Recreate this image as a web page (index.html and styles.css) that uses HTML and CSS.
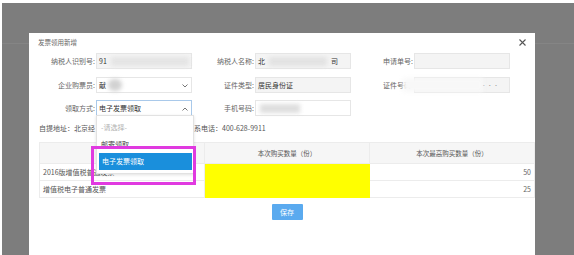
FILE: index.html
```html
<!DOCTYPE html>
<html lang="zh-CN">
<head>
    <meta charset="UTF-8">
    <meta name="viewport" content="width=device-width, initial-scale=1.0">
    <title>发票领用新增</title>
    <link rel="stylesheet" href="styles.css">
</head>
<body>
    <div class="screen">
        <div class="dialog">
            <div class="dialog-head">
                <span class="title">发票领用新增</span>
                <svg class="close" width="7" height="7" viewBox="0 0 7 7">
                    <path d="M0.5 0.5 L6.5 6.5 M6.5 0.5 L0.5 6.5" stroke="#555" stroke-width="1.1" fill="none"/>
                </svg>
            </div>

            <div class="form">
                <label>纳税人识别号:</label>
                <div class="field disabled">91<span class="blur b-id"></span></div>
                <label>纳税人名称:</label>
                <div class="field disabled">北<span class="blur b-name"></span>司</div>
                <label>申请单号:</label>
                <div class="field disabled"></div>

                <label>企业购票员:</label>
                <div class="field select">献<span class="blur b-buyer"></span>
                    <svg class="chevron" width="6" height="4" viewBox="0 0 6 4"><path d="M0.5 0.5 L3 3 L5.5 0.5" stroke="#777" fill="none"/></svg>
                </div>
                <label>证件类型:</label>
                <div class="field disabled">居民身份证</div>
                <label>证件号码:</label>
                <div class="field disabled"><span class="blur b-cert"></span><span class="dots">· · · · ·</span></div>

                <label>领取方式:</label>
                <div class="field select focus">电子发票领取
                    <svg class="chevron" width="6" height="4" viewBox="0 0 6 4"><path d="M0.5 3.5 L3 1 L5.5 3.5" stroke="#777" fill="none"/></svg>
                    <ul class="dropdown">
                        <li class="placeholder">-请选择-</li>
                        <li>邮寄领取</li>
                        <li class="active">电子发票领取</li>
                    </ul>
                </div>
                <label>手机号码:</label>
                <div class="field"><span class="blur b-phone"></span></div>
            </div>

            <div class="address"><span class="address-start">自提地址：北京经</span><span class="address-end">系电话：400-628-9911</span></div>

            <table class="grid">
                <thead>
                    <tr>
                        <th></th>
                        <th>本次购买数量（份）</th>
                        <th>本次最高购买数量（份）</th>
                    </tr>
                </thead>
                <tbody>
                    <tr>
                        <td>2016版增值税普通发票</td>
                        <td class="qty"></td>
                        <td class="num">50</td>
                    </tr>
                    <tr>
                        <td>增值税电子普通发票</td>
                        <td class="qty"></td>
                        <td class="num">25</td>
                    </tr>
                </tbody>
            </table>

            <div class="actions">
                <button class="button">保存</button>
            </div>

            <div class="mark"></div>
        </div>
    </div>
</body>
</html>
```

FILE: styles.css
```css
body {
    margin: 0;
    background-color: #fff;
    font-family: "Noto Sans CJK SC", "Noto Sans", sans-serif;
    font-size: 7px;
    color: #555;
}
.screen {
    margin: 3px 0 0 2px;
    height: 252px;
    padding: 30px 0 0 27px;
    box-sizing: border-box;
    overflow: hidden;
    background-color: #7d7d7d;
    background-image: linear-gradient(#858585, #858585);
    background-size: 100% 1px;
    background-position: 0 40px;
    background-repeat: no-repeat;
}
.dialog {
    position: relative;
    width: 506px;
    height: 240px;
    padding-left: 10px;
    box-sizing: border-box;
    background-color: #fff;
}
.dialog-head {
    display: flex;
    justify-content: space-between;
    align-items: center;
    height: 18px;
    padding-right: 9px;
}
.title {
    margin-left: -1px;
    font-size: 6.5px;
    color: #666;
}
.form {
    display: grid;
    grid-template-columns: 57px 96px 63px 96px 63px 96px;
    grid-auto-rows: 16px;
    row-gap: 7.5px;
    margin-top: 2px;
}
.form label {
    text-align: right;
    line-height: 16px;
    padding-right: 1px;
    color: #666;
}
.field {
    position: relative;
    display: flex;
    align-items: center;
    padding-left: 2px;
    border: 1px solid #e6e6e6;
    background-color: #fff;
    color: #333;
    white-space: nowrap;
}
.field.disabled {
    background-color: #f4f4f4;
}
.field.focus {
    border-color: #a9c9ea;
}
.chevron {
    position: absolute;
    right: 3px;
    top: 6px;
}
.blur {
    display: inline-block;
    height: 9px;
    background-color: #d6d6d6;
    filter: blur(2px);
}
.b-id { width: 78px; margin-left: 4px; background-color: #e4e4e4; }
.b-name { width: 58px; margin: 0 4px; background-color: #e2e2e2; }
.b-buyer { width: 14px; height: 12px; border-radius: 6px; margin-left: 2px; background-color: #d2d2d2; }
.b-cert { width: 80px; height: 14px; margin-left: -14px; background-color: #f8f8f8; }
.b-phone { width: 40px; margin-left: 2px; background-color: #dedede; }
.dots {
    margin-left: -14px;
    color: #999;
    font-size: 5px;
}
.dropdown {
    position: absolute;
    left: -1px;
    top: 100%;
    width: 96px;
    margin: 0;
    padding: 3px 0 3px;
    list-style: none;
    background-color: #fff;
    border: 1px solid #e2e2e2;
    box-shadow: 0 1px 3px rgba(0, 0, 0, 0.12);
    z-index: 2;
}
.dropdown li {
    height: 17px;
    line-height: 17px;
    margin: 0 1px 0 2px;
    padding-left: 2px;
    color: #444;
}
.dropdown .placeholder {
    color: #b0b0b0;
}
.dropdown .active {
    background-color: #1a8fdc;
    color: #fff;
    padding-left: 3px;
}
.address {
    display: flex;
    margin-top: 6px;
    line-height: 12px;
    color: #555;
    white-space: nowrap;
}
.address-start {
    width: 57px;
}
.address-end {
    margin-left: 98px;
}
.grid {
    width: 496px;
    margin-top: 8px;
    border-collapse: collapse;
    table-layout: fixed;
}
.grid th {
    height: 20px;
    padding: 0;
    background-color: #f6f6f6;
    border: 1px solid #ececec;
    font-weight: normal;
    font-size: 6.5px;
    color: #555;
}
.grid td {
    height: 16px;
    padding: 0 3px;
    border: 1px solid #ececec;
    color: #555;
    white-space: nowrap;
}
.grid td.qty {
    background-color: #ffff00;
    border-color: #ffff00;
}
.grid td.num {
    text-align: right;
    color: #666;
}
.actions {
    display: flex;
    justify-content: center;
    width: 496px;
    margin-top: 6px;
}
.button {
    width: 31px;
    height: 16px;
    padding: 0;
    border: none;
    border-radius: 1px;
    background-color: #5aaaef;
    color: #fff;
    font-family: inherit;
    font-size: 7px;
}
.mark {
    position: absolute;
    left: 62px;
    top: 113px;
    width: 99px;
    height: 33px;
    border: 3px solid #e03ae0;
    z-index: 3;
}
```
